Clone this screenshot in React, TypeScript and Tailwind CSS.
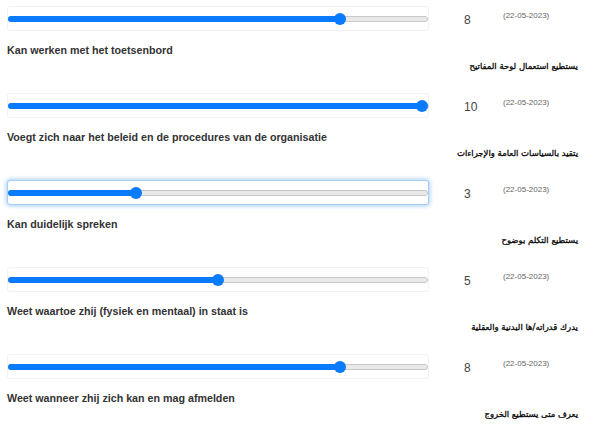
import React from "react";

type Row = { nl: string; ar: string; v: number; focused?: boolean };

const rows: Row[] = [
  { nl: "Kan werken met het toetsenbord", ar: "يستطيع استعمال لوحة المفاتيح", v: 8 },
  { nl: "Voegt zich naar het beleid en de procedures van de organisatie", ar: "يتقيد بالسياسات العامة والإجراءات", v: 10 },
  { nl: "Kan duidelijk spreken", ar: "يستطيع التكلم بوضوح", v: 3, focused: true },
  { nl: "Weet waartoe zhij (fysiek en mentaal) in staat is", ar: "يدرك قدراته/ها البدنية والعقلية", v: 5 },
  { nl: "Weet wanneer zhij zich kan en mag afmelden", ar: "يعرف متى يستطيع الخروج", v: 8 },
];

function Slider({ v, focused }: { v: number; focused?: boolean }) {
  const center = 6 + (408 * v) / 10;
  return (
    <div
      className={
        "flex h-[25px] w-[422px] items-center rounded-[3px] border bg-white " +
        (focused
          ? "border-[#a9ccf5] shadow-[0_0_4px_1px_rgba(0,123,255,0.35)]"
          : "border-[#f2f2f2]")
      }
    >
      <div className="flex h-[6px] flex-1 items-center rounded-full border border-[#c9c9c9] bg-[#e9e9e9]">
        <div className="-ml-px h-[6px] rounded-full bg-[#0a7bff]" style={{ width: center + 3 }} />
        <div className="-ml-[9px] h-[12px] w-[12px] shrink-0 rounded-full bg-[#0a7bff]" />
      </div>
    </div>
  );
}

export default function App() {
  return (
    <div className="w-[606px] h-[436px] overflow-hidden bg-white pl-[7px] pt-[6px] font-['Liberation_Sans',Arial,sans-serif]">
      {rows.map((r, i) => (
        <div key={i} className="h-[87px]">
          <div className="flex">
            <div className="w-[422px]">
              <Slider v={r.v} focused={r.focused} />
              <div className="mt-[12px] text-[10.7px] leading-[14px] font-bold text-[#333]">{r.nl}</div>
            </div>
            <div className="ml-[35px] w-[39px] pt-[7px] text-[12px] leading-[14px] text-[#444]">{r.v}</div>
            <div className="pt-[5px] text-[8px] leading-[10px] text-[#666]">(22-05-2023)</div>
          </div>
          <div
            dir="rtl"
            className="mt-[2px] pr-[28px] text-right text-[8.5px] leading-[14px] font-normal text-[#000] [-webkit-text-stroke:0.3px_#111] font-['DejaVu_Sans','Noto_Sans',sans-serif]"
          >
            {r.ar}
          </div>
        </div>
      ))}
    </div>
  );
}
